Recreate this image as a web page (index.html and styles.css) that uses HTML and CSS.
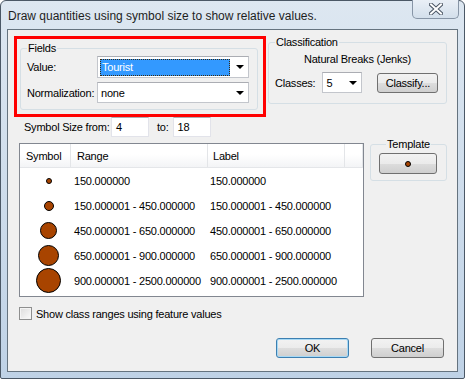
FILE: index.html
```html
<!DOCTYPE html>
<html lang="en">
  <head>
    <meta charset="UTF-8" />
    <title>Graduated Symbols</title>
    <link rel="stylesheet" href="styles.css">
  </head>
  <body>
    <div class="window">
      <div class="titlebar">
        <span class="title">Draw quantities using symbol size to show relative values.</span>
        <button class="close" aria-label="Close">
          <svg width="14" height="12" viewBox="0 0 14 12">
            <path d="M2 1.5 L12 10.5 M12 1.5 L2 10.5" stroke="#4a5563" stroke-width="4" stroke-linecap="square" />
            <path d="M2 1.5 L12 10.5 M12 1.5 L2 10.5" stroke="#ffffff" stroke-width="2" stroke-linecap="square" />
          </svg>
        </button>
      </div>

      <div class="client">
        <div class="top-row">
          <div class="highlight">
            <fieldset class="group fields">
              <legend>Fields</legend>
              <div class="field-grid">
                <span class="lbl">Value:</span>
                <div class="combo">
                  <span class="combo-text selected">Tourist</span>
                  <span class="arrow"></span>
                </div>
                <span class="lbl">Normalization:</span>
                <div class="combo">
                  <span class="combo-text">none</span>
                  <span class="arrow"></span>
                </div>
              </div>
            </fieldset>
          </div>

          <fieldset class="group classification">
            <legend>Classification</legend>
            <div class="method">Natural Breaks (Jenks)</div>
            <div class="classes-row">
              <span class="lbl">Classes:</span>
              <div class="combo small">
                <span class="combo-text">5</span>
                <span class="arrow"></span>
              </div>
              <button class="btn classify">Classify...</button>
            </div>
          </fieldset>
        </div>

        <div class="size-row">
          <span class="lbl size-lbl">Symbol Size from:</span>
          <div class="textbox">4</div>
          <span class="lbl to">to:</span>
          <div class="textbox">18</div>
        </div>

        <div class="mid-row">
          <div class="listview">
            <div class="lv-row lv-header">
              <div class="col sym">Symbol</div>
              <div class="col range">Range</div>
              <div class="col label">Label</div>
              <div class="col filler"></div>
            </div>
            <div class="lv-row">
              <div class="col sym"><span class="dot s1"></span></div>
              <div class="col range">150.000000</div>
              <div class="col label">150.000000</div>
            </div>
            <div class="lv-row">
              <div class="col sym"><span class="dot s2"></span></div>
              <div class="col range">150.000001 - 450.000000</div>
              <div class="col label">150.000001 - 450.000000</div>
            </div>
            <div class="lv-row">
              <div class="col sym"><span class="dot s3"></span></div>
              <div class="col range">450.000001 - 650.000000</div>
              <div class="col label">450.000001 - 650.000000</div>
            </div>
            <div class="lv-row">
              <div class="col sym"><span class="dot s4"></span></div>
              <div class="col range">650.000001 - 900.000000</div>
              <div class="col label">650.000001 - 900.000000</div>
            </div>
            <div class="lv-row">
              <div class="col sym"><span class="dot s5"></span></div>
              <div class="col range">900.000001 - 2500.000000</div>
              <div class="col label">900.000001 - 2500.000000</div>
            </div>
          </div>

          <fieldset class="group template">
            <legend>Template</legend>
            <button class="btn template-btn"><span class="dot s1"></span></button>
          </fieldset>
        </div>

        <div class="check-row">
          <span class="checkbox"></span>
          <span class="lbl">Show class ranges using feature values</span>
        </div>

        <div class="dialog-buttons">
          <button class="btn default">OK</button>
          <button class="btn">Cancel</button>
        </div>
      </div>
    </div>
  </body>
</html>
```

FILE: styles.css
```css
* {
  box-sizing: border-box;
}

:root {
  --frame-top: #dde7f1;
  --frame-bottom: #bfd2e6;
  --face: #f0f0f0;
  --group-border: #d5dfe5;
  --field-border: #c3c6cc;
  --symbol: #a84400;
  --text: #000000;
}

body {
  margin: 0;
  font-family: "Liberation Sans", Arial, sans-serif;
  font-size: 11px;
  letter-spacing: -0.22px;
  color: var(--text);
  background: #ffffff;
}

.window {
  width: 465px;
  height: 379px;
  border: 1px solid #4b5866;
  border-radius: 6px 6px 2px 2px;
  background: linear-gradient(var(--frame-top), var(--frame-bottom));
  display: flex;
  flex-direction: column;
}

.titlebar {
  height: 28px;
  display: flex;
  justify-content: space-between;
  align-items: flex-start;
}

.title {
  font-size: 12px;
  letter-spacing: 0;
  color: #1e1e1e;
  padding: 8px 0 0 7px;
  white-space: nowrap;
}

.close {
  width: 47px;
  height: 19px;
  margin: -1px 5px 0 0;
  padding: 0;
  border: 1px solid #8795a6;
  border-top: none;
  border-radius: 0 0 5px 5px;
  background: linear-gradient(#e9eff6, #d3dfeb);
  display: flex;
  align-items: center;
  justify-content: center;
}

.client {
  width: 451px;
  height: 343px;
  margin-left: 6px;
  border: 1px solid #65737f;
  background: var(--face);
  display: flex;
  flex-direction: column;
}

/* group boxes */
.group {
  margin: 0;
  border: 1px solid var(--group-border);
  border-radius: 3px;
  padding: 0 6px;
  min-width: 0;
}

.group legend {
  padding: 0 1px;
  line-height: 13px;
  font-weight: normal;
}

.lbl {
  white-space: nowrap;
}

.top-row {
  display: flex;
  align-items: flex-start;
  margin: 6px 0 0 6px;
}

.highlight {
  width: 252px;
  height: 81px;
  border: 3px solid #ff0000;
  padding: 3px 0 0 3px;
}

.fields {
  width: 238px;
  height: 68px;
}

.field-grid {
  display: grid;
  grid-template-columns: 70px 152px;
  grid-template-rows: 22px 21px;
  row-gap: 4px;
  align-items: center;
  margin-top: 1px;
}

.combo {
  height: 100%;
  background: #ffffff;
  border: 1px solid var(--field-border);
  border-top-color: #abadb3;
  display: flex;
  align-items: center;
  padding: 0 3px 0 2px;
}

.combo-text {
  flex: 1;
  padding-left: 1px;
}

.combo-text.selected {
  height: 17px;
  line-height: 15px;
  margin-right: 6px;
  background: #3399ff;
  color: #ffffff;
  border: 1px dotted #3a2a10;
}

.arrow {
  width: 0;
  height: 0;
  margin-right: 1px;
  border-left: 4px solid transparent;
  border-right: 4px solid transparent;
  border-top: 4px solid #000000;
}

.classification {
  width: 179px;
  height: 68px;
  margin-left: 2px;
}

.method {
  text-align: center;
  margin-top: 4px;
  line-height: 13px;
}

.classes-row {
  display: flex;
  align-items: center;
  margin-top: 6px;
}

.combo.small {
  width: 40px;
  height: 21px;
  margin-left: 7px;
}

/* push buttons */
.btn {
  font: inherit;
  letter-spacing: inherit;
  color: var(--text);
  height: 20px;
  padding: 0;
  border: 1px solid #707070;
  border-radius: 3px;
  background: linear-gradient(#f2f2f2 0%, #ebebeb 50%, #dddddd 51%, #cfcfcf 100%);
  display: flex;
  align-items: center;
  justify-content: center;
}

.btn.default {
  border-color: #3c7fb1;
  box-shadow: inset 0 0 0 1px #a7d9f5;
}

.classify {
  width: 61px;
  margin-left: 15px;
}

.size-row {
  display: flex;
  align-items: center;
  margin: 0 0 0 16px;
  height: 20px;
}

.size-lbl {
  width: 87px;
}

.textbox {
  width: 38px;
  height: 20px;
  background: #ffffff;
  border: 1px solid #e2e3ea;
  border-top-color: #abadb3;
  padding: 3px 0 0 4px;
}

.to {
  margin: 0 4px 0 8px;
}

.mid-row {
  display: flex;
  align-items: flex-start;
  margin-top: 1px;
}

.listview {
  width: 345px;
  height: 154px;
  margin: 5px 0 0 11px;
  border: 1px solid #828790;
  background: #ffffff;
}

.lv-row {
  display: flex;
  height: 25px;
  align-items: center;
  white-space: nowrap;
}

.lv-header {
  height: 24px;
  background: linear-gradient(#ffffff 0%, #ffffff 45%, #f3f4f6 100%);
  border-bottom: 1px solid #e4e6e9;
  align-items: stretch;
}

.lv-header .col {
  border-right: 1px solid #e3e5e8;
  display: flex;
  align-items: center;
}

.col.sym {
  width: 51px;
  padding-left: 7px;
}

.col.range {
  width: 137px;
  padding-left: 3px;
}

.col.label {
  width: 137px;
  padding-left: 2px;
}

.lv-header .col.range {
  padding-left: 6px;
}

.lv-header .col.label {
  padding-left: 5px;
}

.col.filler {
  flex: 1;
}

.lv-row .col.sym {
  display: flex;
  justify-content: center;
  padding-left: 6px;
}

.lv-header .col.sym {
  justify-content: flex-start;
}

.dot {
  display: block;
  border-radius: 50%;
  background: var(--symbol);
  border: 1px solid #000000;
}

.dot.s1 { width: 6px; height: 6px; }
.dot.s2 { width: 10px; height: 10px; }
.dot.s3 { width: 17px; height: 17px; }
.dot.s4 { width: 21px; height: 21px; }
.dot.s5 { width: 25px; height: 25px; }

.template {
  width: 77px;
  height: 43px;
  margin-left: 6px;
  padding: 2px 8px 0;
}

.template legend {
  margin: 0 auto;
}

.template-btn {
  width: 58px;
  height: 21px;
}

.check-row {
  display: flex;
  align-items: center;
  margin: 10px 0 0 11px;
  gap: 4px;
}

.checkbox {
  width: 13px;
  height: 13px;
  border: 1px solid #8e8f8f;
  background: linear-gradient(135deg, #dcdcdc, #fbfbfb);
  box-shadow: inset 0 0 0 1px #f4f4f4;
}

.dialog-buttons {
  display: flex;
  justify-content: flex-end;
  gap: 22px;
  margin-top: 18px;
  padding-right: 13px;
}

.dialog-buttons .btn {
  width: 73px;
}
```
